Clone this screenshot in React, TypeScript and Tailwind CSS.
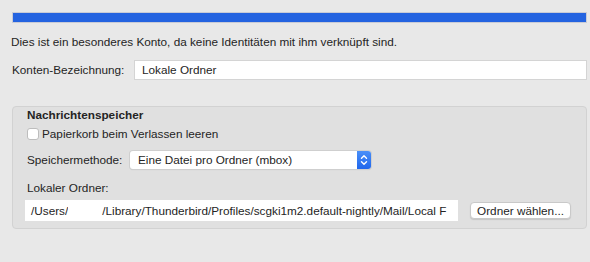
import React from 'react';

const font = { fontFamily: '"Liberation Sans", Arial, sans-serif' };

const Stepper = () => (
    <div className="flex h-full w-[14px] items-center justify-center rounded-r-[3px] bg-gradient-to-b from-[#4a8ff8] to-[#1f66ec]">
        <svg width="8" height="12" viewBox="0 0 8 12" fill="none" stroke="white" strokeWidth="1.4" strokeLinecap="round" strokeLinejoin="round">
            <path d="M1.5 4.2 L4 1.8 L6.5 4.2" />
            <path d="M1.5 7.8 L4 10.2 L6.5 7.8" />
        </svg>
    </div>
);

export default function App() {
    return (
        <div className="flex h-[262px] w-[590px] flex-col overflow-hidden bg-[#e8e8e8] text-[11.75px] text-[#242424]" style={font}>
            {/* progress-like bar at the top */}
            <div className="ml-[12px] mt-[12px] h-[11px] w-[575px] border border-[#c9cbd6] bg-[#2463e0]" />

            <p className="ml-[11px] mt-[12px] leading-[14px]">
                Dies ist ein besonderes Konto, da keine Identitäten mit ihm verknüpft sind.
            </p>

            <div className="ml-[12px] mt-[11px] flex h-[20px] items-center">
                <span className="w-[122px]">Konten-Bezeichnung:</span>
                <div className="flex h-[20px] w-[453px] items-center border border-[#d4d4d4] bg-white pl-[7px]">
                    Lokale Ordner
                </div>
            </div>

            {/* Nachrichtenspeicher group */}
            <div className="ml-[12px] mt-[26px] flex h-[123px] w-[575px] flex-col rounded-[4px] border border-[#d2d2d2] bg-[#e0e0e0] pl-[14px]">
                <div className="h-[16px] leading-[16px] font-bold">Nachrichtenspeicher</div>

                <label className="mt-[3px] flex h-[16px] items-center">
                    <span className="h-[12px] w-[12px] rounded-[3px] border border-[#bdbdbd] bg-white" />
                    <span className="ml-[3px]">Papierkorb beim Verlassen leeren</span>
                </label>

                <div className="mt-[9px] flex h-[18px] items-center">
                    <span className="w-[103px]">Speichermethode:</span>
                    <div className="flex h-[18px] w-[241px] items-center rounded-[3px] bg-white shadow-[0_0_0_1px_#cfcfcf,0_1px_1px_rgba(0,0,0,0.15)]">
                        <span className="flex-1 pl-[8px]">Eine Datei pro Ordner (mbox)</span>
                        <Stepper />
                    </div>
                </div>

                <div className="mt-[12px] h-[14px] leading-[14px]">Lokaler Ordner:</div>

                <div className="mt-[5px] flex items-center">
                    <div className="-ml-[2px] flex h-[21px] w-[433px] items-center overflow-hidden whitespace-nowrap bg-white pl-[6px]">
                        <span className="shrink-0">/Users/</span>
                        <span className="inline-block h-[11px] w-[34px] shrink-0 bg-white" />
                        <span className="shrink-0">/Library/Thunderbird/Profiles/scgki1m2.default-nightly/Mail/Local F</span>
                    </div>
                    <button className="ml-[12px] flex h-[17px] w-[101px] items-center justify-center rounded-[4px] border border-[#c9c9c9] bg-white shadow-[0_1px_1px_rgba(0,0,0,0.12)]">
                        Ordner wählen...
                    </button>
                </div>
            </div>
        </div>
    );
}
